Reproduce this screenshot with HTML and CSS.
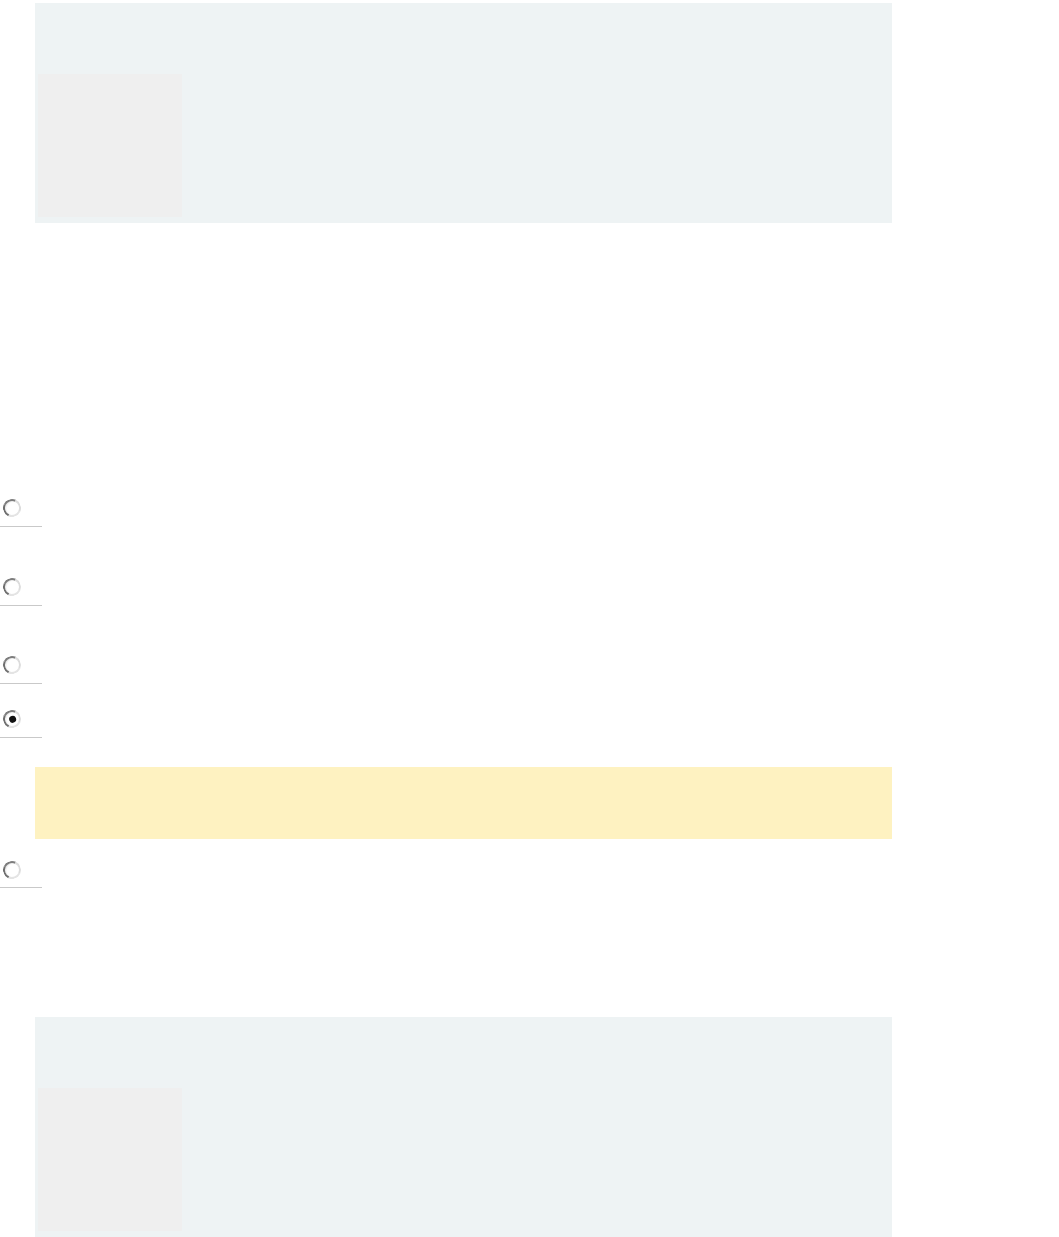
FILE: index.html
```html
<!DOCTYPE html>
<html lang="en">
<head>
<meta charset="utf-8">
<title>Options</title>
<link rel="stylesheet" href="styles.css">
</head>
<body>
<div class="page">
  <section class="card card-top">
    <div class="thumb"></div>
  </section>

  <ul class="options">
    <li class="option option-1"><label class="choice"><span class="radio"></span></label></li>
    <li class="option option-2"><label class="choice"><span class="radio"></span></label></li>
    <li class="option option-3"><label class="choice"><span class="radio"></span></label></li>
    <li class="option option-4"><label class="choice"><span class="radio checked"></span></label></li>
  </ul>

  <div class="notice"></div>

  <ul class="options">
    <li class="option option-5"><label class="choice"><span class="radio"></span></label></li>
  </ul>

  <section class="card card-bottom">
    <div class="thumb"></div>
  </section>
</div>
</body>
</html>
```

FILE: styles.css
```css
html, body {
  margin: 0;
  padding: 0;
  background: #ffffff;
  font-family: "Liberation Sans", Arial, sans-serif;
}

.page {
  display: flex;
  flex-direction: column;
  align-items: flex-start;
}

.card {
  box-sizing: border-box;
  width: 857px;
  height: 220px;
  margin-left: 35px;
  padding: 71px 0 6px 3px;
  background: #eef3f4;
}

.card-top {
  margin-top: 3px;
}

.card-bottom {
  margin-top: 129px;
}

.thumb {
  width: 144px;
  height: 143px;
  background: #efefef;
}

.options {
  list-style: none;
  margin: 0;
  padding: 0;
  display: flex;
  flex-direction: column;
}

.option {
  width: 39px;
  padding: 26px 0 9px 3px;
  border-bottom: 1px solid #c9c9c9;
}

.option-1 { margin-top: 250px; }
.option-2 { margin-top: 25px; }
.option-3 { margin-top: 24px; }
.option-4 { margin-top: 0; }
.option-5 { padding-top: 22px; padding-bottom: 8px; }

.choice {
  display: flex;
  align-items: center;
  height: 18px;
}

.radio {
  box-sizing: border-box;
  position: relative;
  display: block;
  width: 18px;
  height: 18px;
  border-radius: 50%;
  border: 2.5px solid;
  border-color: #7d7d7d #dcdcdc #e4e4e4 #6e6e6e;
  transform: rotate(-20deg);
  background: #ffffff;
  box-shadow: inset 1px 1px 1px rgba(0, 0, 0, 0.08);
}

.radio.checked::after {
  content: "";
  position: absolute;
  left: 50%;
  top: 50%;
  width: 7px;
  height: 7px;
  margin: -3.5px 0 0 -3.5px;
  border-radius: 50%;
  background: #111111;
}

.notice {
  box-sizing: border-box;
  width: 857px;
  height: 72px;
  margin: 29px 0 0 35px;
  background: #fef2c1;
}
```
